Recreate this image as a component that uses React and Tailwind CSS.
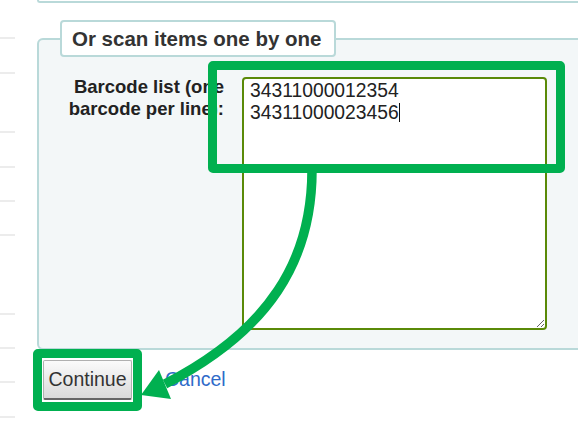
import React from 'react';

const SideLines = () => (
    <div className="w-[15px] shrink-0 flex flex-col">
        <div className="mt-[37px] h-[2px] bg-[#ececec]" />
        <div className="mt-[33px] h-[2px] bg-[#ececec]" />
        <div className="mt-[57px] h-[2px] bg-[#ececec]" />
        <div className="mt-[33px] h-[2px] bg-[#ececec]" />
        <div className="mt-[32px] h-[2px] bg-[#ececec]" />
        <div className="mt-[32px] h-[2px] bg-[#ececec]" />
        <div className="mt-[77px] h-[2px] bg-[#ececec]" />
        <div className="mt-[32px] h-[2px] bg-[#ececec]" />
        <div className="mt-[32px] h-[2px] bg-[#ececec]" />
        <div className="mt-[33px] h-[2px] bg-[#ececec]" />
    </div>
);

const App = () => {
    return (
        <div className="relative w-[578px] h-[426px] overflow-hidden bg-white flex font-['Liberation_Sans',Arial,sans-serif]">
            <SideLines />

            <div className="ml-[22px] flex flex-col min-w-0">
                {/* bottom of the previous fieldset */}
                <div className="h-[3px] w-[560px] border-l-2 border-b-2 border-[#b9d9d9] rounded-bl-[6px]" />

                <fieldset className="mt-[17px] w-[560px] border-2 border-[#b9d9d9] rounded-[6px] bg-[#f3f7f8] pl-[21px] pt-[20px] pb-[18px]">
                    <legend className="border-2 border-[#b9d9d9] rounded-[4px] bg-white pl-[10px] pr-[12px] py-[6px] text-[20.5px] leading-[21px] font-bold text-[#333]">
                        Or scan items one by one
                    </legend>
                    <div className="flex items-start gap-[18px]">
                        <label className="w-[164px] -mt-[1px] text-right text-[18.5px] leading-[22px] font-bold text-[#222]">
                            Barcode list (one barcode per line):
                        </label>
                        <textarea
                            className="w-[305px] h-[253px] border-2 border-[#5a8a08] rounded-[4px] bg-white px-[6px] pt-[1px] text-[19.3px] leading-[22px] text-[#222] outline-none"
                            defaultValue={'34311000012354\n34311000023456'}
                        />
                    </div>
                </fieldset>

                <div className="mt-[10px] ml-[6px] flex items-center">
                    <button className="h-[40px] w-[89px] border border-[#b0b0b0] border-b-2 border-b-[#666] rounded-[2px] bg-linear-to-b from-[#fbfbfb] to-[#dadada] text-[19.5px] text-[#333]">
                        Continue
                    </button>
                    <a href="#" className="ml-[33px] text-[19.5px] text-[#2f6bc9]">Cancel</a>
                </div>
            </div>

            {/* text caret at the end of the second barcode */}
            <div className="absolute left-[399px] top-[103px] w-[1px] h-[19px] bg-[#111]" />

            {/* annotation overlay */}
            <div className="absolute left-[208px] top-[61px] w-[357px] h-[112px] border-[9px] border-[#00b050] rounded-[5px] pointer-events-none" />
            <div className="absolute left-[33px] top-[349px] w-[109px] h-[62px] border-[9px] border-[#00b050] rounded-[5px] pointer-events-none" />
            <svg className="absolute inset-0 pointer-events-none" width="578" height="426" viewBox="0 0 578 426">
                <path d="M312 170 C312 260 270 330 165 384" fill="none" stroke="#00b050" strokeWidth="9.5" />
                <polygon points="141,395 159,370 171,399" fill="#00b050" />
            </svg>
        </div>
    );
};

export default App;
